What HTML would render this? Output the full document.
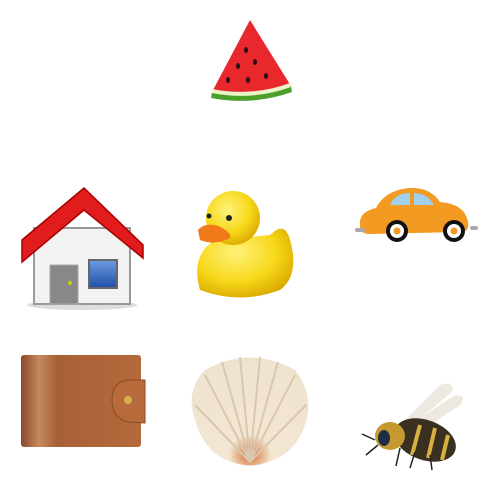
<!DOCTYPE html><html><head><style>body{margin:0;background:#fff}svg{display:block}</style></head><body>
<svg width="500" height="500" viewBox="0 0 500 500" xmlns="http://www.w3.org/2000/svg">
<defs>
<linearGradient id="wl" x1="0" x2="1"><stop offset="0" stop-color="#8a4a2a"/><stop offset=".15" stop-color="#c58a5e"/><stop offset=".3" stop-color="#a86036"/><stop offset="1" stop-color="#b5693c"/></linearGradient>
<radialGradient id="dk" cx=".4" cy=".35" r=".7"><stop offset="0" stop-color="#fff27a"/><stop offset=".6" stop-color="#f7d81a"/><stop offset="1" stop-color="#d9a800"/></radialGradient>
<radialGradient id="sh" cx=".5" cy=".9" r=".9"><stop offset="0" stop-color="#d46a2a"/><stop offset=".2" stop-color="#f3e6d2"/><stop offset="1" stop-color="#efe3cf"/></radialGradient>
<linearGradient id="win" x1="0" y1="0" x2="0" y2="1"><stop offset="0" stop-color="#6d9be0"/><stop offset="1" stop-color="#1f4fa8"/></linearGradient>
</defs>
<path d="M250 20 L291 86 Q252 100 212 92 Z" fill="#e8282c"/>
<path d="M212 92 Q252 100 291 86 L292 92 Q252 106 211 98 Z" fill="#4aa02a"/>
<path d="M212 89 Q252 97 290 83 L291 87 Q252 101 212 93Z" fill="#e9f4c8"/>
<g fill="#2a1010"><ellipse cx="246" cy="50" rx="2" ry="3"/><ellipse cx="238" cy="66" rx="2" ry="3"/><ellipse cx="255" cy="62" rx="2" ry="3"/><ellipse cx="266" cy="76" rx="2" ry="3"/><ellipse cx="228" cy="80" rx="2" ry="3"/><ellipse cx="248" cy="80" rx="2" ry="3"/></g>
<ellipse cx="82" cy="305" rx="55" ry="5" fill="#ddd"/>
<rect x="34" y="228" width="96" height="76" fill="#f2f2f2" stroke="#999" stroke-width="2"/>
<rect x="50" y="265" width="28" height="39" fill="#888" stroke="#aaa"/>
<circle cx="70" cy="283" r="2" fill="#cc0"/>
<rect x="89" y="260" width="28" height="28" fill="url(#win)" stroke="#666" stroke-width="2"/>
<path d="M22 240 L84 188 L143 245 L143 258 L84 210 L22 262 Z" fill="#e01c1c" stroke="#a00" stroke-width="1.5"/>
<path d="M200 290 Q190 255 215 240 L270 235 Q285 220 290 240 Q300 275 280 290 Q240 305 200 290Z" fill="url(#dk)"/>
<circle cx="233" cy="218" r="27" fill="url(#dk)"/>
<path d="M198 230 Q205 222 218 226 Q232 232 230 238 Q215 246 200 240 Z" fill="#f07a1a"/>
<circle cx="209" cy="216" r="2.5" fill="#222"/><circle cx="229" cy="218" r="3" fill="#222"/>
<path d="M360 226 Q358 212 376 208 Q385 190 410 188 Q430 187 440 202 Q465 204 468 222 Q470 232 460 232 L370 234 Q360 234 360 226Z" fill="#f29a22"/>
<path d="M390 205 Q395 193 410 193 L410 205Z M414 205 L414 193 Q427 193 434 205Z" fill="#9fd0ec"/>
<rect x="355" y="228" width="10" height="4" rx="2" fill="#aaa"/><rect x="470" y="226" width="8" height="4" rx="2" fill="#aaa"/>
<circle cx="397" cy="231" r="11" fill="#111"/><circle cx="397" cy="231" r="7" fill="#fff"/><circle cx="397" cy="231" r="3.5" fill="#f29a22"/>
<circle cx="454" cy="231" r="11" fill="#111"/><circle cx="454" cy="231" r="7" fill="#fff"/><circle cx="454" cy="231" r="3.5" fill="#f29a22"/>
<rect x="21" y="355" width="120" height="92" rx="3" fill="url(#wl)"/>
<path d="M145 380 L128 380 Q112 382 112 400 Q112 418 128 422 L145 423Z" fill="#b86a3a" stroke="#8a4a24" stroke-width="1"/>
<circle cx="128" cy="400" r="4" fill="#d8b050"/>
<path d="M195 420 Q185 390 205 370 Q250 345 295 370 Q315 395 305 425 Q295 455 265 463 Q250 468 235 463 Q205 455 195 420Z" fill="url(#sh)"/>
<g stroke="#d8c8ae" stroke-width="2" fill="none"><path d="M250 462 L205 375"/><path d="M250 462 L222 362"/><path d="M250 462 L240 357"/><path d="M250 462 L260 357"/><path d="M250 462 L278 362"/><path d="M250 462 L295 375"/><path d="M250 462 L195 405"/><path d="M250 462 L306 405"/></g>
<path d="M405 420 L440 385 Q455 380 452 392 L412 425Z" fill="#e8e2d8" opacity=".8"/>
<path d="M410 425 L455 395 Q468 395 460 405 L420 432Z" fill="#e8e2d8" opacity=".8"/>
<ellipse cx="425" cy="440" rx="32" ry="20" fill="#3a3020" transform="rotate(20 425 440)"/>
<g stroke="#d8b040" stroke-width="4"><path d="M420 425 L412 455"/><path d="M435 428 L428 458"/><path d="M448 435 L442 460"/></g>
<ellipse cx="390" cy="436" rx="15" ry="14" fill="#c49a30"/>
<ellipse cx="384" cy="438" rx="6" ry="8" fill="#1e2e44"/>
<g stroke="#222" stroke-width="1.5"><path d="M375 440 L362 434"/><path d="M378 445 L366 455"/><path d="M400 448 L396 466"/><path d="M415 452 L410 468"/><path d="M430 455 L432 470"/></g>
</svg>
</body></html>
